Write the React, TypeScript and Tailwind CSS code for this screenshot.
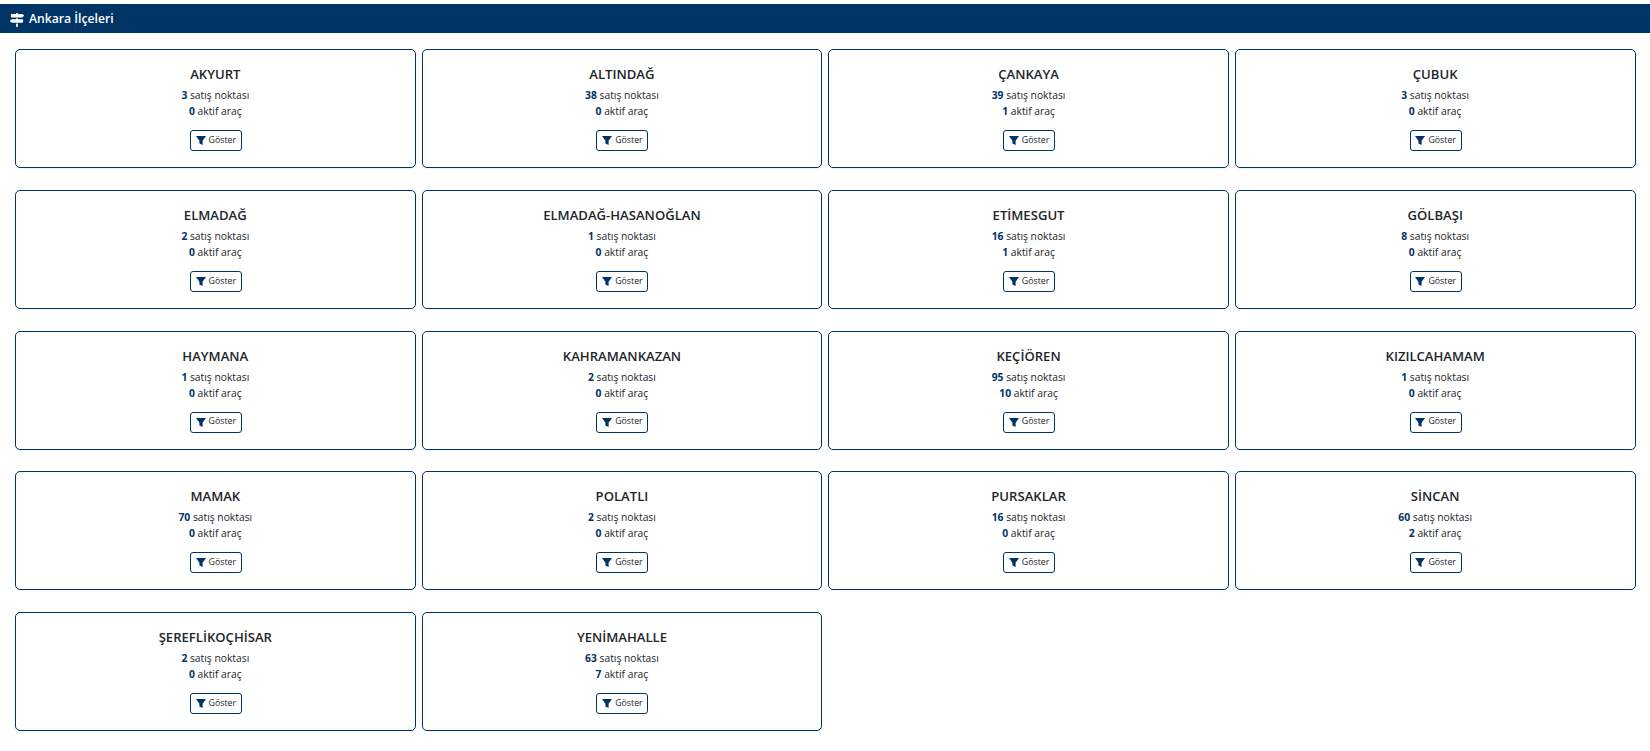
import React from 'react';
import { FaMapSigns } from 'react-icons/fa';

const districts = [
  { name: 'AKYURT', points: 3, vehicles: 0 },
  { name: 'ALTINDAĞ', points: 38, vehicles: 0 },
  { name: 'ÇANKAYA', points: 39, vehicles: 1 },
  { name: 'ÇUBUK', points: 3, vehicles: 0 },
  { name: 'ELMADAĞ', points: 2, vehicles: 0 },
  { name: 'ELMADAĞ-HASANOĞLAN', points: 1, vehicles: 0 },
  { name: 'ETİMESGUT', points: 16, vehicles: 1 },
  { name: 'GÖLBAŞI', points: 8, vehicles: 0 },
  { name: 'HAYMANA', points: 1, vehicles: 0 },
  { name: 'KAHRAMANKAZAN', points: 2, vehicles: 0 },
  { name: 'KEÇİÖREN', points: 95, vehicles: 10 },
  { name: 'KIZILCAHAMAM', points: 1, vehicles: 0 },
  { name: 'MAMAK', points: 70, vehicles: 0 },
  { name: 'POLATLI', points: 2, vehicles: 0 },
  { name: 'PURSAKLAR', points: 16, vehicles: 0 },
  { name: 'SİNCAN', points: 60, vehicles: 2 },
  { name: 'ŞEREFLİKOÇHİSAR', points: 2, vehicles: 0 },
  { name: 'YENİMAHALLE', points: 63, vehicles: 7 },
];

// Solid funnel, heavier than the stock filter glyph
const FunnelIcon = () => (
  <svg viewBox="0 0 10 9" className="w-[10px] h-[9px] text-[#003366]" fill="currentColor">
    <path d="M0 0h10L6.6 4.8V9L3.4 7.6V4.8z" />
  </svg>
);

const DistrictCard = ({ name, points, vehicles }: { name: string; points: number; vehicles: number }) => (
  <div className="h-[119px] rounded-[5px] border border-[#003366] bg-white pt-[14px] flex flex-col items-center text-center shadow-[0_1px_2px_rgba(0,0,0,0.06)]">
    <h5 className="text-[13.1px] leading-[20px] font-semibold text-[#212529]">{name}</h5>
    <p className="mt-[3px] text-[10.3px] leading-[16px] text-[#212529]">
      <b className="font-bold text-[#003366]">{points}</b> satış noktası
    </p>
    <p className="text-[10.3px] leading-[16px] text-[#212529]">
      <b className="font-bold text-[#003366]">{vehicles}</b> aktif araç
    </p>
    <button className="mt-[11px] ml-[1px] h-[21px] w-[52px] rounded-[3px] border border-[#003366] flex items-center justify-center gap-[3px] text-[8.8px] text-[#212529]">
      <FunnelIcon />
      Göster
    </button>
  </div>
);

export default function App() {
  return (
    <div className="min-h-[751px] bg-white pt-1 font-['Open_Sans',sans-serif]">
      {/* Header */}
      <div className="h-[29px] bg-[#003366] flex items-center gap-[5px] pl-[10px] pt-[2px] text-white">
        <FaMapSigns className="w-[14px] h-[14px]" />
        <span className="text-[12.2px] font-semibold">Ankara İlçeleri</span>
      </div>

      {/* Districts */}
      <div className="grid grid-cols-4 gap-x-[6px] gap-y-[21.75px] pl-[15px] pr-[14.5px] pt-4">
        {districts.map((d) => (
          <DistrictCard key={d.name} {...d} />
        ))}
      </div>
    </div>
  );
}
